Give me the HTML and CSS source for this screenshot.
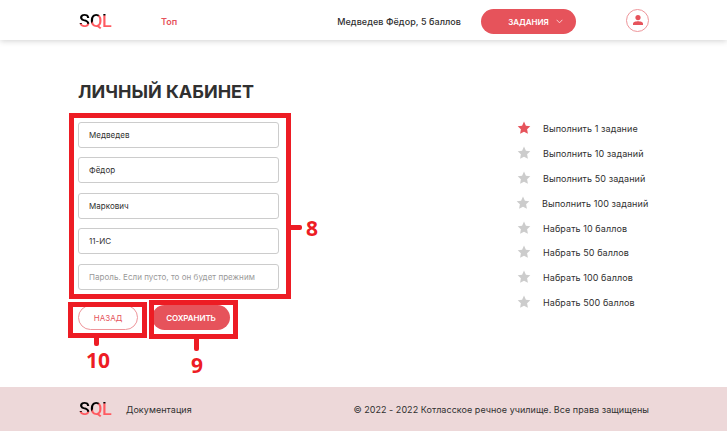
FILE: index.html
```html
<!DOCTYPE html>
<html lang="ru">
<head>
<meta charset="utf-8">
<title>Личный кабинет</title>
<link rel="stylesheet" href="styles.css">
</head>
<body>
<header class="header">
  <div class="logo"><span class="s">S</span><span class="q">Q</span><span class="l">L</span></div>
  <a class="top">Топ</a>
  <span class="user">Медведев Фёдор, 5 баллов</span>
  <button class="btn tasks">ЗАДАНИЯ<svg width="7" height="5" viewBox="0 0 7 5"><path d="M.6.8 3.5 3.8 6.4.8" fill="none" stroke="#fbdadc" stroke-width=".9"/></svg></button>
  <a class="account"><svg width="10" height="10" viewBox="0 0 10 10" fill="#e6535b"><circle cx="5" cy="2.6" r="2.6"/><path d="M0 10V8.6C0 7 2.8 6.2 5 6.2s5 .8 5 2.4V10z"/></svg></a>
</header>
<main class="main">
  <form class="form">
    <h1 class="title">ЛИЧНЫЙ КАБИНЕТ</h1>
    <div class="fields">
      <div class="field">Медведев</div>
      <div class="field">Фёдор</div>
      <div class="field">Маркович</div>
      <div class="field">11-ИС</div>
      <div class="field hint">Пароль. Если пусто, то он будет прежним</div>
    </div>
    <div class="actions">
      <button type="button" class="btn back">НАЗАД</button>
      <button type="button" class="btn save">СОХРАНИТЬ</button>
    </div>
  </form>
  <ul class="goals">
    <li class="done"><svg class="star" viewBox="0 0 14 14"><path d="M7 .6 8.9 4.7 13.3 5.2 10.1 8.3 10.9 12.8 7 10.7 3.1 12.8 3.9 8.3.7 5.2 5.1 4.7z"/></svg><span>Выполнить 1 задание</span></li>
    <li><svg class="star" viewBox="0 0 14 14"><path d="M7 .6 8.9 4.7 13.3 5.2 10.1 8.3 10.9 12.8 7 10.7 3.1 12.8 3.9 8.3.7 5.2 5.1 4.7z"/></svg><span>Выполнить 10 заданий</span></li>
    <li><svg class="star" viewBox="0 0 14 14"><path d="M7 .6 8.9 4.7 13.3 5.2 10.1 8.3 10.9 12.8 7 10.7 3.1 12.8 3.9 8.3.7 5.2 5.1 4.7z"/></svg><span>Выполнить 50 заданий</span></li>
    <li class="narrow"><svg class="star" viewBox="0 0 14 14"><path d="M7 .6 8.9 4.7 13.3 5.2 10.1 8.3 10.9 12.8 7 10.7 3.1 12.8 3.9 8.3.7 5.2 5.1 4.7z"/></svg><span>Выполнить 100 заданий</span></li>
    <li><svg class="star" viewBox="0 0 14 14"><path d="M7 .6 8.9 4.7 13.3 5.2 10.1 8.3 10.9 12.8 7 10.7 3.1 12.8 3.9 8.3.7 5.2 5.1 4.7z"/></svg><span>Набрать 10 баллов</span></li>
    <li><svg class="star" viewBox="0 0 14 14"><path d="M7 .6 8.9 4.7 13.3 5.2 10.1 8.3 10.9 12.8 7 10.7 3.1 12.8 3.9 8.3.7 5.2 5.1 4.7z"/></svg><span>Набрать 50 баллов</span></li>
    <li><svg class="star" viewBox="0 0 14 14"><path d="M7 .6 8.9 4.7 13.3 5.2 10.1 8.3 10.9 12.8 7 10.7 3.1 12.8 3.9 8.3.7 5.2 5.1 4.7z"/></svg><span>Набрать 100 баллов</span></li>
    <li><svg class="star" viewBox="0 0 14 14"><path d="M7 .6 8.9 4.7 13.3 5.2 10.1 8.3 10.9 12.8 7 10.7 3.1 12.8 3.9 8.3.7 5.2 5.1 4.7z"/></svg><span>Набрать 500 баллов</span></li>
  </ul>
</main>
<footer class="footer">
  <div class="logo"><span class="s">S</span><span class="q">Q</span><span class="l">L</span></div>
  <a class="docs">Документация</a>
  <span class="copy">© 2022 - 2022 Котласское речное училище. Все права защищены</span>
</footer>
<div class="mark mark8"></div><div class="stem stem8"></div><b class="num num8">8</b>
<div class="mark mark10"></div><div class="stem stem10"></div><b class="num num10">10</b>
<div class="mark mark9"></div><div class="stem stem9"></div><b class="num num9">9</b>
</body>
</html>
```
FILE: styles.css
```css
* { box-sizing: border-box; }
body {
  margin: 0;
  width: 727px;
  height: 431px;
  position: relative;
  display: flex;
  flex-direction: column;
  overflow: hidden;
  background: #fff;
  color: #303030;
  font: 9px/12px Inter, "Liberation Sans", sans-serif;
}
.header {
  height: 40px;
  padding: 0 78px 0 79px;
  display: flex;
  align-items: flex-start;
  box-shadow: 0 1px 6px rgba(0, 0, 0, .18);
}
.logo {
  width: 34px;
  height: 20px;
  margin-top: 10px;
  display: flex;
  font: 500 18px/22px Roboto, sans-serif;
  color: transparent;
}
.logo span { -webkit-background-clip: text; background-clip: text; }
.s { width: 11px; background-image: linear-gradient(#000 66%, #ff5a60 72%); }
.q { width: 12px; background-image: linear-gradient(135deg, #000 42%, #ff5a60 48%); }
.l { width: 11px; background-image: linear-gradient(#000 24%, #ff5a60 30%); }
.top { margin: 16px 0 0 48px; color: #e6535b; font-weight: 600; }
.user { margin: 16px 20px 0 auto; font-weight: 500; letter-spacing: .06px; white-space: nowrap; }
.btn {
  height: 25px;
  padding: 0;
  border: 0;
  border-radius: 13px;
  background: #e6535b;
  color: #fff;
  font: 600 8px/12px Inter, sans-serif;
}
.tasks { width: 95px; margin-top: 9px; display: flex; align-items: center; justify-content: center; gap: 7px; padding-left: 14px; letter-spacing: -.05px; }
.account {
  width: 23px;
  height: 23px;
  margin: 9px 0 0 50px;
  display: flex;
  align-items: center;
  justify-content: center;
  border: 1px solid #ee959a;
  border-radius: 50%;
}
.account svg { margin-bottom: 1px; }
.main { flex: 1; padding: 39px 78px 0; display: flex; justify-content: space-between; }
.form { width: 201px; }
.title { margin: 0; height: 43px; font-size: 18px; line-height: 26px; font-weight: 700; white-space: nowrap; }
.fields { display: grid; grid-template-rows: 35px 36px 35px 36px 26px; }
.field { height: 26px; padding: 6px 10px; border: 1px solid #ccc; border-radius: 3px; font-size: 8px; line-height: 13px; letter-spacing: .04px; white-space: nowrap; }
.hint { color: #999; }
.actions { display: flex; gap: 14px; padding-top: 15px; }
.back { width: 60px; border: 1px solid #ee959a; background: #fff; color: #e6535b; font-weight: 400; }
.save { width: 78px; letter-spacing: -.08px; }
.goals { margin: 42px 0 0; padding: 0; width: 132px; list-style: none; letter-spacing: .08px; }
.goals li { height: 24.9px; display: flex; gap: 12px; white-space: nowrap; }
.star { width: 14px; height: 14px; flex: none; fill: #ccc; }
.done .star { fill: #e6535b; }
.goals span { padding-top: 2px; }
.narrow { margin-left: -1px; }
.footer { height: 44px; padding: 0 78px 0 79px; display: flex; align-items: flex-start; background: #edd8d9; }
.footer .logo { margin-top: 11px; }
.docs { margin: 17px 0 0 13px; letter-spacing: .05px; }
.copy { margin: 17px 0 0 auto; letter-spacing: .04px; white-space: nowrap; }
.mark { position: absolute; border: 5px solid #ed1c24; }
.mark8 { left: 69px; top: 113px; width: 222px; height: 186px; }
.mark10 { left: 68px; top: 302px; width: 79px; height: 36px; }
.mark9 { left: 149px; top: 300px; width: 89px; height: 39px; }
.stem { position: absolute; width: 5px; height: 11px; background: #ed1c24; border-radius: 0 0 2px 2px; }
.stem8 { left: 290px; top: 225px; width: 12px; height: 5px; border-radius: 0 2px 2px 0; }
.stem10 { left: 94px; top: 335px; }
.stem9 { left: 194px; top: 338px; height: 13px; }
.num { position: absolute; color: #ed1c24; font: 700 21px/24px "Open Sans", sans-serif; }
.num8 { left: 306px; top: 216px; }
.num10 { left: 86px; top: 348px; }
.num9 { left: 191px; top: 353px; }
```
